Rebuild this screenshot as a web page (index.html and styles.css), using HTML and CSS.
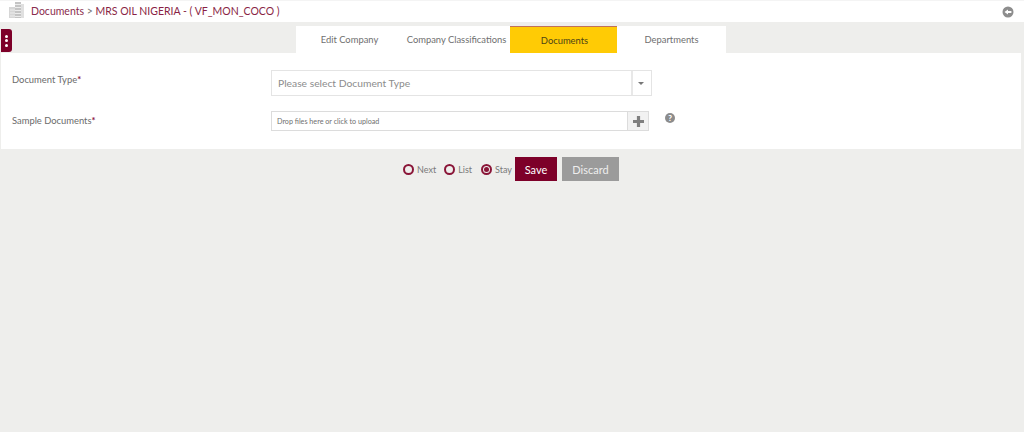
FILE: index.html
```html
<!DOCTYPE html>
<html lang="en">
<head>
<meta charset="utf-8">
<title>Documents</title>
<link rel="stylesheet" href="styles.css">
</head>
<body>
<header class="topbar">
  <svg class="logo" width="15" height="16" viewBox="0 0 15 16"><rect x="0" y="5" width="7" height="11" fill="#d6d6d6"/><rect x="6" y="0" width="6" height="16" fill="#c4c4c4"/><rect x="12" y="2" width="3" height="14" fill="#e0e0e0"/><path d="M6 2.500h6M6 5.500h6M6 8.500h6M6 11.500h6M6 14.500h6M1 8h5M1 11h5M1 14h5" stroke="#ececec" stroke-width="1"/></svg>
  <div class="crumb"><span class="crumb-root">Documents</span> <span class="crumb-sep">&gt;</span> MRS OIL NIGERIA - ( VF_MON_COCO )</div>
  <svg class="back" width="12" height="12" viewBox="0 0 12 12"><circle cx="6" cy="6" r="5.500" fill="#8d8d8d"/><path d="M2.500 6L6 3.400V5h3.400v2H6v1.600z" fill="#fff"/></svg>
</header>
<button class="kebab" aria-label="Menu"><i></i><i></i><i></i></button>
<nav class="tabs">
  <a class="tab">Edit Company</a>
  <a class="tab">Company Classifications</a>
  <a class="tab active">Documents</a>
  <a class="tab wide">Departments</a>
</nav>
<main class="panel">
  <div class="row row-type">
    <label class="label">Document Type<b>*</b></label>
    <div class="select">
      <span class="select-text">Please select Document Type</span>
      <span class="select-arrow"><i></i></span>
    </div>
  </div>
  <div class="row row-sample">
    <label class="label">Sample Documents<b>*</b></label>
    <div class="upload">
      <span class="upload-text">Drop files here or click to upload</span>
      <span class="upload-btn"><svg width="13" height="13" viewBox="0 0 13 13"><path d="M6.500 1v11M1 6.500h11" stroke="#7f7f7f" stroke-width="3.200"/></svg></span>
    </div>
    <span class="help">?</span>
  </div>
</main>
<div class="actions">
  <label class="radio"><i class="dot"></i>Next</label>
  <label class="radio"><i class="dot"></i>List</label>
  <label class="radio"><i class="dot on"></i>Stay</label>
  <button class="btn save">Save</button>
  <button class="btn discard">Discard</button>
</div>
</body>
</html>
```
FILE: styles.css
```css
* { box-sizing: border-box; }
html, body { margin: 0; height: 100%; }
body { background: #eeeeec; font-family: Lato, "Open Sans", sans-serif; color: #6f6f6f; overflow: hidden; position: relative; }
.topbar { height: 22px; background: #fff; display: flex; align-items: center; padding: 0 10px 2px 9px; border-top: 1px solid #f4f4f4; }
.logo { flex: none; margin-top: -1px; }
.crumb { margin-left: 7px; font-size: 10.500px; color: #8a1f45; flex: 1; }
.crumb-root { color: #8a2c4d; }
.crumb-sep { color: #777; }
.back { flex: none; margin-top: 2px; }
.kebab { position: absolute; left: 1px; top: 29px; width: 11px; height: 23px; background: #7d0029; border: 0; border-radius: 0 3px 3px 0; padding: 0; display: flex; flex-direction: column; align-items: center; justify-content: center; gap: 1.500px; }
.kebab i { width: 3px; height: 3px; border-radius: 50%; background: #fff; }
.tabs { display: flex; margin: 4px 0 0 296px; height: 27px; }
.tab { width: 107px; background: #fff; font-size: 9.400px; color: #6f6f6f; display: flex; align-items: center; justify-content: center; white-space: nowrap; }
.tab.wide { width: 109px; }
.tab.active { background: #ffcb05; color: #4d4416; border-top: 1px solid #c0705a; padding-left: 2px; }
.panel { margin: 0 3px 0 1px; height: 96px; background: #fff; padding: 17px 0 0 11px; }
.row { display: flex; }
.row-sample { margin-top: 15px; }
.label { width: 259px; flex: none; font-size: 9.400px; color: #6b6b6b; padding-top: 4px; }
.label b { color: #8a1538; font-weight: 700; }
.select { width: 381px; height: 26px; border: 1px solid #e4e4e4; display: flex; align-items: center; }
.select-text { flex: 1; padding: 0 0 1px 6px; font-size: 10.300px; color: #8c8c8c; }
.select-arrow { width: 20px; height: 100%; border-left: 2px solid #e8e8e8; display: flex; align-items: center; justify-content: center; padding-right: 2px; }
.select-arrow i { width: 0; height: 0; border: 3px solid transparent; border-top: 3px solid #777; border-bottom: 0; }
.upload { width: 378px; height: 20px; border: 1px solid #dcdcdc; display: flex; align-items: center; }
.upload-text { flex: 1; padding-left: 5px; font-size: 7.200px; color: #6f6f6f; }
.upload-btn { width: 21px; height: 100%; border-left: 1px solid #dcdcdc; background: #f2f2f2; display: flex; align-items: center; justify-content: center; }
.help { width: 10px; height: 10px; margin: 2px 0 0 16px; background: #8c8c8c; border-radius: 50%; color: #fff; font-size: 8px; font-weight: 900; line-height: 10px; text-align: center; }
.actions { display: flex; align-items: center; margin: 8px 0 0 403px; height: 24px; }
.radio { display: flex; align-items: center; font-size: 9px; color: #7a7a7a; margin-right: 8px; }
.radio:nth-child(2) { margin-right: 9px; }
.radio:nth-child(3) { margin-right: 3px; }
.dot { width: 11px; height: 11px; border: 2px solid #8a1538; border-radius: 50%; margin-right: 3px; display: flex; align-items: center; justify-content: center; }
.dot.on::after { content: ""; width: 5px; height: 5px; border-radius: 50%; background: #8a1538; }
.btn { border: 0; height: 24px; font-family: inherit; font-size: 11px; color: #fff; padding: 0; }
.save { width: 42px; background: #7d0029; margin-right: 5px; }
.discard { width: 57px; background: #9b9b9b; color: #eee; }
```
